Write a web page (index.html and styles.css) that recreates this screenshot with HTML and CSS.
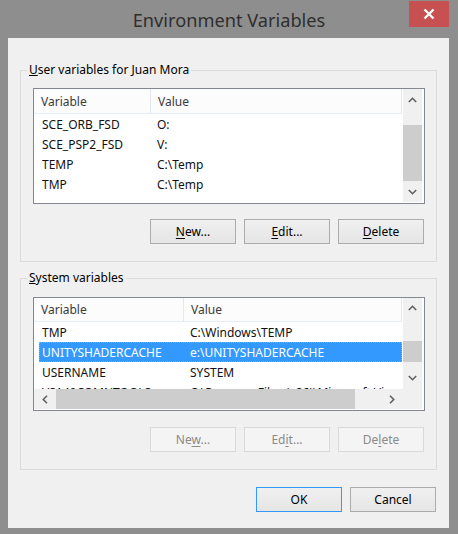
FILE: index.html
```html
<!DOCTYPE html>
<html>
<head>
<meta charset="utf-8">
<link rel="stylesheet" href="styles.css">
</head>
<body>
<div class="window">
  <div class="titlebar">
    <span class="tb-spacer"></span>
    <div class="title">Environment Variables</div>
    <div class="tb-right">
      <div class="close">
        <svg width="12" height="12" viewBox="0 0 12 12"><path d="M1.5 1.5 L10.5 10.5 M10.5 1.5 L1.5 10.5" stroke="#fff" stroke-width="2.4" fill="none"/></svg>
      </div>
    </div>
  </div>
  <div class="client">
    <fieldset class="group group-user">
      <legend><u>U</u>ser variables for Juan Mora</legend>
      <div class="list list-user">
        <div class="lv">
          <div class="lv-header"><div class="hcell">Variable</div><div class="hcell">Value</div></div>
          <div class="lv-row"><span class="c1">SCE_ORB_FSD</span><span class="c2">O:</span></div>
          <div class="lv-row"><span class="c1">SCE_PSP2_FSD</span><span class="c2">V:</span></div>
          <div class="lv-row"><span class="c1">TEMP</span><span class="c2">C:\Temp</span></div>
          <div class="lv-row"><span class="c1">TMP</span><span class="c2">C:\Temp</span></div>
        </div>
        <div class="vscroll vs-user">
          <div class="sb-btn sb-up"><svg width="9" height="6" viewBox="0 0 9 6"><polyline points="0.8,5 4.5,1.3 8.2,5" fill="none" stroke="#606060" stroke-width="1.6"/></svg></div>
          <div class="thumb"></div>
          <div class="sb-btn sb-down"><svg width="9" height="6" viewBox="0 0 9 6"><polyline points="0.8,1 4.5,4.7 8.2,1" fill="none" stroke="#606060" stroke-width="1.6"/></svg></div>
        </div>
      </div>
      <div class="btn-row">
        <button class="btn"><u>N</u>ew...</button>
        <button class="btn"><u>E</u>dit...</button>
        <button class="btn"><u>D</u>elete</button>
      </div>
    </fieldset>

    <fieldset class="group group-sys">
      <legend><u>S</u>ystem variables</legend>
      <div class="list list-sys">
        <div class="lv">
          <div class="lv-header"><div class="hcell">Variable</div><div class="hcell">Value</div></div>
          <div class="lv-row"><span class="c1">TMP</span><span class="c2">C:\Windows\TEMP</span></div>
          <div class="lv-row selected"><span class="c1">UNITYSHADERCACHE</span><span class="c2">e:\UNITYSHADERCACHE</span></div>
          <div class="lv-row"><span class="c1">USERNAME</span><span class="c2">SYSTEM</span></div>
          <div class="lv-row"><span class="c1">VS140COMNTOOLS</span><span class="c2">C:\Program Files (x86)\Microsoft Visual Studio 14.0\Common7\Tools\</span></div>
        </div>
        <div class="vscroll vs-sys">
          <div class="sb-btn sb-up"><svg width="9" height="6" viewBox="0 0 9 6"><polyline points="0.8,5 4.5,1.3 8.2,5" fill="none" stroke="#606060" stroke-width="1.6"/></svg></div>
          <div class="thumb"></div>
          <div class="sb-btn sb-down"><svg width="9" height="6" viewBox="0 0 9 6"><polyline points="0.8,1 4.5,4.7 8.2,1" fill="none" stroke="#606060" stroke-width="1.6"/></svg></div>
        </div>
        <div class="hscroll">
          <div class="sb-btn sb-left"><svg width="6" height="9" viewBox="0 0 6 9"><polyline points="5,0.8 1.3,4.5 5,8.2" fill="none" stroke="#606060" stroke-width="1.6"/></svg></div>
          <div class="hthumb"></div>
          <div class="sb-btn sb-right"><svg width="6" height="9" viewBox="0 0 6 9"><polyline points="1,0.8 4.7,4.5 1,8.2" fill="none" stroke="#606060" stroke-width="1.6"/></svg></div>
        </div>
        <div class="corner"></div>
      </div>
      <div class="btn-row">
        <button class="btn" disabled>Ne<u>w</u>...</button>
        <button class="btn" disabled>Ed<u>i</u>t...</button>
        <button class="btn" disabled>De<u>l</u>ete</button>
      </div>
    </fieldset>

    <div class="dialog-buttons">
      <button class="btn btn-default">OK</button>
      <button class="btn">Cancel</button>
    </div>
  </div>
</div>
</body>
</html>
```
FILE: styles.css
```css
html, body {
  margin: 0;
  padding: 0;
}
body {
  width: 458px;
  height: 534px;
  background: #8e8e8e;
  font-family: "Noto Sans", "Open Sans", sans-serif;
  font-size: 12px;
  color: #000;
  overflow: hidden;
}
.window {
  display: flex;
  flex-direction: column;
  height: 534px;
}
.titlebar {
  height: 38px;
  flex: none;
  display: grid;
  grid-template-columns: 1fr auto 1fr;
}
.title {
  align-self: center;
  font-size: 18.2px;
  line-height: 24px;
  color: #2e2e2e;
  padding-top: 1px;
}
.tb-right {
  display: flex;
  justify-content: flex-end;
  align-items: flex-start;
}
.close {
  width: 40px;
  height: 26px;
  margin: 1px 9px 0 0;
  background: #c75050;
  display: flex;
  align-items: center;
  justify-content: center;
}
.client {
  flex: 1;
  margin: 0 9px 6px 8px;
  background: #f0f0f0;
  padding: 0 12px 16px 12px;
  display: flex;
  flex-direction: column;
}
.group {
  border: 1px solid #dcdcdc;
  margin: 24px 0 0 0;
  padding: 10px 11px 17px 12px;
  min-width: 0;
}
.group-sys {
  margin-top: 8px;
  padding-top: 11px;
}
.group legend {
  margin-left: -6px;
  padding: 0 2px;
  line-height: 16px;
  font-size: 12px;
}
.list {
  box-sizing: border-box;
  border: 1px solid #828790;
  background: #fff;
  padding: 0 2px 1px 0;
  display: grid;
  grid-template-columns: 1fr 19px;
  overflow: hidden;
}
.list-user {
  height: 116px;
  grid-template-rows: 1fr;
  --c1: 117px;
}
.list-sys {
  height: 114px;
  grid-template-rows: 1fr 20px;
  --c1: 150px;
}
.lv {
  overflow: hidden;
  min-width: 0;
  min-height: 0;
}
.lv-header {
  display: grid;
  grid-template-columns: var(--c1) 1fr;
  box-sizing: border-box;
  height: 25px;
  background: #fcfcfc;
  border-bottom: 1px solid #e3edf8;
  border-right: 1px solid #e3e8ef;
  margin-right: 1px;
  color: #3a3a3a;
}
.list-sys .lv-header {
  height: 24px;
}
.hcell {
  padding: 2px 0 0 7px;
  line-height: 22px;
  white-space: nowrap;
  overflow: hidden;
}
.list-sys .hcell {
  padding-top: 1px;
}
.hcell:first-child {
  border-right: 1px solid #e3e8ef;
}
.lv-row {
  display: grid;
  grid-template-columns: calc(var(--c1) - 5px) 1fr;
  box-sizing: border-box;
  height: 20px;
  line-height: 20px;
  padding-top: 1px;
  margin: 0 1px 0 5px;
  white-space: nowrap;
  overflow: hidden;
  color: #111;
}
.lv-row .c1 {
  padding-left: 3px;
  overflow: hidden;
}
.lv-row .c2 {
  padding-left: 6px;
  overflow: hidden;
}
.lv-row.selected {
  background: #3399ff;
  color: #fff;
  outline: 1px dotted #e69a45;
  outline-offset: -1px;
}
.vscroll {
  background: #f0f0f0;
  display: flex;
  flex-direction: column;
}
.sb-btn {
  display: flex;
  align-items: center;
  justify-content: center;
  flex: none;
}
.thumb {
  background: #cdcdcd;
  flex: none;
}
.vs-user .sb-up { height: 21px; }
.vs-user .thumb { margin-top: 15px; height: 56px; }
.vs-user .sb-down { flex: 1; }
.vs-sys .sb-up { height: 20px; }
.vs-sys .thumb { margin-top: 23px; height: 21px; }
.vs-sys .sb-down { height: 22px; margin-top: auto; }
.hscroll {
  background: #f0f0f0;
  display: flex;
}
.sb-left, .sb-right {
  width: 22px;
}
.sb-right {
  margin-left: auto;
}
.hthumb {
  width: 299px;
  background: #cdcdcd;
}
.corner {
  background: #f0f0f0;
}
.btn-row {
  display: flex;
  justify-content: flex-end;
  gap: 8px;
  margin-top: 15px;
  padding-right: 1px;
}
.group-sys .btn-row {
  margin-top: 16px;
}
.btn {
  box-sizing: border-box;
  width: 86px;
  height: 25px;
  border: 1px solid #acacac;
  background: linear-gradient(#f0f0f0, #e5e5e5);
  font-family: "Noto Sans", "Open Sans", sans-serif;
  font-size: 12px;
  color: #000;
  padding: 1px 0 0 0;
  margin: 0;
  border-radius: 0;
  line-height: 20px;
}
.btn u {
  text-underline-offset: 2px;
}
.btn:disabled {
  border-color: #d9d9d9;
  background: #f4f4f4;
  color: #8a8a8a;
}
.btn-default {
  border-color: #3399ff;
}
.dialog-buttons {
  display: flex;
  justify-content: flex-end;
  gap: 8px;
  margin-top: 17px;
  padding-right: 1px;
}
```
